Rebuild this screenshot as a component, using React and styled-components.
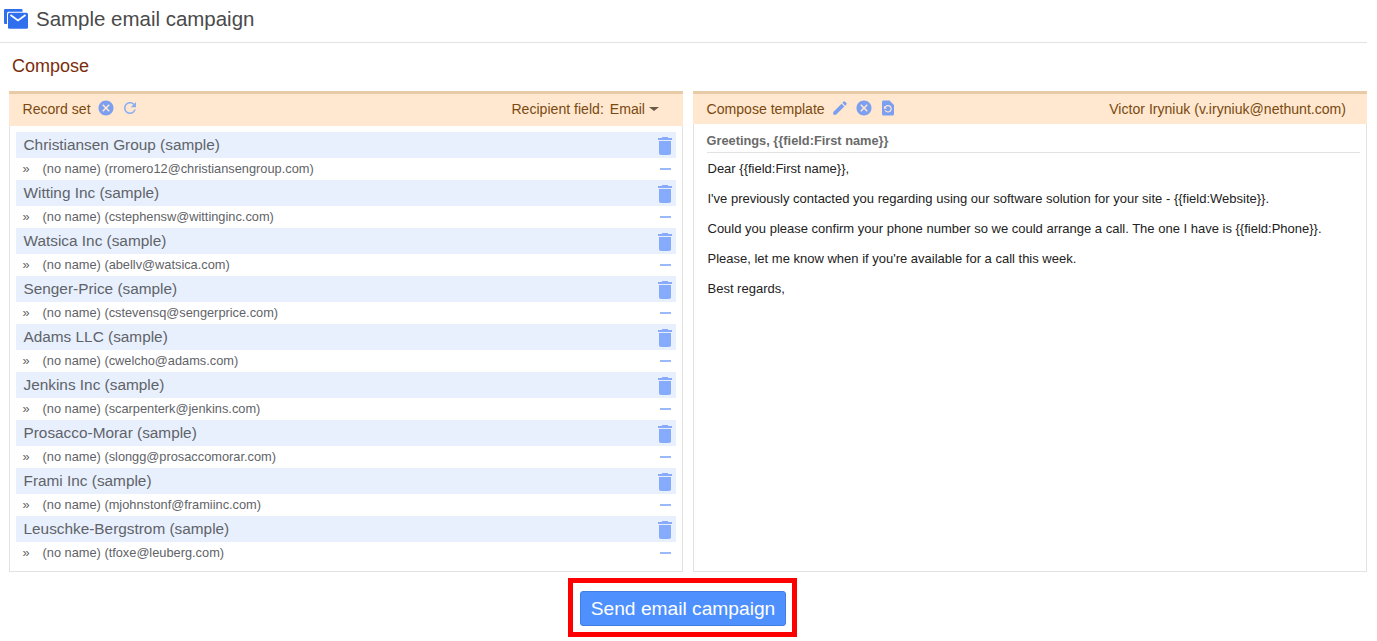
import React from "react";
import styled, { createGlobalStyle } from "styled-components";

const Global = createGlobalStyle`
  html, body { margin: 0; padding: 0; background: #fff; height: 641px; overflow: hidden; }
  body { font-family: "Liberation Sans", Arial, sans-serif; }
  * { box-sizing: border-box; }
`;

const Page = styled.div`
  width: 1367px;
  height: 641px;
  display: flex;
  flex-direction: column;
`;
const TitleBar = styled.header`
  height: 43px;
  border-bottom: 1px solid #e3e3e3;
  display: flex;
  align-items: center;
  gap: 8px;
  padding: 0 0 4px 4px;
`;
const Title = styled.h1`
  margin: 0;
  font-size: 20.48px;
  font-weight: 400;
  color: #4a4a4a;
`;
const SectionTitle = styled.h2`
  margin: 0;
  height: 48px;
  padding: 13px 0 0 12px;
  font-size: 18px;
  line-height: 21px;
  font-weight: 400;
  color: #7b2d0b;
`;
const Panels = styled.div`
  display: flex;
  gap: 10px;
  padding-left: 9px;
  height: 481px;
`;
const Panel = styled.section`
  flex: 0 0 674px;
  display: flex;
  flex-direction: column;
  border: 1px solid #e2e2e2;
  border-top: 0;
`;
const PanelHead = styled.div`
  height: ${(p) => p.$h}px;
  margin: 0 -1px;
  padding: 0 ${(p) => p.$right}px ${(p) => p.$bottom}px 13.5px;
  background: #ffe8cf;
  border-top: 3px solid #e6cba6;
  display: flex;
  align-items: center;
  justify-content: space-between;
  color: #7a4a12;
  font-size: 14.08px;
`;
const HeadGroup = styled.div`
  display: flex;
  align-items: center;
  gap: ${(p) => p.$gap || 0}px;
`;
const Glyph = styled.svg`
  width: ${(p) => p.$size}px;
  height: ${(p) => p.$size}px;
  fill: ${(p) => p.$color};
  flex: none;
  display: block;
`;
const HeadIcon = styled(Glyph)`
  margin-top: -2px;
`;
const RowIcon = styled(Glyph)`
  margin: 2px -1px 0 0;
`;
const Recipient = styled.span`
  margin-right: 6px;
`;
const Caret = styled.span`
  width: 0;
  height: 0;
  margin-left: 4px;
  border-left: 5px solid transparent;
  border-right: 5px solid transparent;
  border-top: 4px solid #6a5a48;
`;
const RecordList = styled.div`
  padding: 6px 6px 0 6px;
`;
const GroupRow = styled.div`
  height: 26px;
  background: #e8f0fe;
  display: flex;
  align-items: center;
  justify-content: space-between;
  padding-left: 7.5px;
  font-size: 15.36px;
  color: #5f6368;
`;
const EmailRow = styled.div`
  height: 22px;
  display: flex;
  align-items: center;
  justify-content: space-between;
  padding: 0 5px 0 6.5px;
  font-size: 12.8px;
  color: #5f6368;
`;
const EmailText = styled.span`
  padding-bottom: 2px;
`;
const Chevron = styled.span`
  display: inline-block;
  width: 20px;
`;
const Dash = styled.span`
  width: 11px;
  height: 2px;
  background: #9ab8fa;
`;
const Subject = styled.div`
  margin: 0 6px 0 12.5px;
  height: 29px;
  padding-top: 9px;
  border-bottom: 1px solid #e2e2e2;
  font-size: 12.8px;
  line-height: 15px;
  font-weight: 700;
  color: #6a6a6a;
`;
const MailBody = styled.div`
  padding: 8px 13.5px;
  font-size: 13px;
  line-height: 15px;
  color: #222;
`;
const Para = styled.p`
  margin: 0 0 15px;
`;
const ActionBar = styled.div`
  display: flex;
  justify-content: center;
  padding-top: 6px;
  width: 1365px;
`;
const Highlight = styled.div`
  border: 5px solid #ff0000;
  padding: 8px 6px 6px 7px;
`;
const SendButton = styled.button`
  width: 206px;
  height: 35px;
  padding: 0;
  background: #4d90fe;
  border: 1px solid #3f7fe4;
  border-radius: 3px;
  color: #fff;
  font-family: inherit;
  font-size: 19.2px;
`;

const P = {
  del: "M6 19c0 1.1.9 2 2 2h8c1.1 0 2-.9 2-2V7H6v12zM19 4h-3.5l-1-1h-5l-1 1H5v2h14V4z",
  cancel: "M12 2C6.47 2 2 6.47 2 12s4.47 10 10 10 10-4.47 10-10S17.53 2 12 2zm5 13.59L15.59 17 12 13.41 8.41 17 7 15.59 10.59 12 7 8.41 8.41 7 12 10.59 15.59 7 17 8.41 13.41 12 17 15.59z",
  refresh: "M17.65 6.35C16.2 4.9 14.21 4 12 4c-4.42 0-7.99 3.58-7.99 8s3.57 8 7.99 8c3.73 0 6.84-2.55 7.73-6h-2.08c-.82 2.33-3.04 4-5.65 4-3.31 0-6-2.69-6-6s2.69-6 6-6c1.66 0 3.14.69 4.22 1.78L13 11h7V4l-2.35 2.35z",
  edit: "M3 17.25V21h3.75L17.81 9.94l-3.75-3.75L3 17.25zM20.71 7.04a1 1 0 000-1.41l-2.34-2.34a1 1 0 00-1.41 0l-1.83 1.83 3.75 3.75 1.83-1.83z",
  restore: "M14 2H6c-1.1 0-2 .9-2 2v16c0 1.1.9 2 2 2h12c1.1 0 2-.9 2-2V8l-6-6zm-2 16c-2.05 0-3.81-1.24-4.58-3h1.71c.63.9 1.68 1.5 2.87 1.5 1.93 0 3.5-1.57 3.5-3.5S13.93 9.5 12 9.5c-1.35 0-2.52.78-3.1 1.9l1.6 1.6h-4V9l1.3 1.3C8.69 8.92 10.23 8 12 8c2.76 0 5 2.24 5 5s-2.24 5-5 5z",
};

const HIcon = ({ d, color = "#7d9ff0" }) => (
  <HeadIcon viewBox="0 0 24 24" $size={18} $color={color}>
    <path d={d} />
  </HeadIcon>
);

const Logo = () => (
  <svg width="24" height="20" viewBox="0 0 24 20" style={{ flex: "none" }}>
    <rect x="0" y="0" width="18.5" height="15" rx="1" fill="#2f6fee" />
    <rect x="3" y="2.7" width="21" height="17.3" rx="1.5" fill="#fff" />
    <rect x="4" y="3.7" width="20" height="16" rx="1.5" fill="#2f6fee" />
    <path d="M6.5 6L14 11.5L21.5 6" fill="none" stroke="#fff" strokeWidth="1.7" />
  </svg>
);

const records = [
  ["Christiansen Group (sample)", "rromero12@christiansengroup.com"],
  ["Witting Inc (sample)", "cstephensw@wittinginc.com"],
  ["Watsica Inc (sample)", "abellv@watsica.com"],
  ["Senger-Price (sample)", "cstevensq@sengerprice.com"],
  ["Adams LLC (sample)", "cwelcho@adams.com"],
  ["Jenkins Inc (sample)", "scarpenterk@jenkins.com"],
  ["Prosacco-Morar (sample)", "slongg@prosaccomorar.com"],
  ["Frami Inc (sample)", "mjohnstonf@framiinc.com"],
  ["Leuschke-Bergstrom (sample)", "tfoxe@leuberg.com"],
];

const lines = [
  "Dear {{field:First name}},",
  "I've previously contacted you regarding using our software solution for your site - {{field:Website}}.",
  "Could you please confirm your phone number so we could arrange a call. The one I have is {{field:Phone}}.",
  "Please, let me know when if you're available for a call this week.",
  "Best regards,",
];

export default function App() {
  return (
    <Page>
      <Global />
      <TitleBar>
        <Logo />
        <Title>Sample email campaign</Title>
      </TitleBar>
      <SectionTitle>Compose</SectionTitle>
      <Panels>
        <Panel>
          <PanelHead $h={35} $right={24} $bottom={2}>
            <HeadGroup $gap={6}>
              <span>Record set</span>
              <HIcon d={P.cancel} />
              <HIcon d={P.refresh} color="#8aaef5" />
            </HeadGroup>
            <HeadGroup>
              <Recipient>Recipient field:</Recipient>
              <span>Email</span>
              <Caret />
            </HeadGroup>
          </PanelHead>
          <RecordList>
            {records.map(([name, email]) => (
              <React.Fragment key={email}>
                <GroupRow>
                  {name}
                  <RowIcon viewBox="0 0 24 24" $size={24} $color="#86aafc">
                    <path d={P.del} />
                  </RowIcon>
                </GroupRow>
                <EmailRow>
                  <EmailText>
                    <Chevron>»</Chevron>(no name) ({email})
                  </EmailText>
                  <Dash />
                </EmailRow>
              </React.Fragment>
            ))}
          </RecordList>
        </Panel>
        <Panel>
          <PanelHead $h={33} $right={21} $bottom={0}>
            <HeadGroup $gap={6}>
              <span>Compose template</span>
              <HIcon d={P.edit} />
              <HIcon d={P.cancel} />
              <HIcon d={P.restore} />
            </HeadGroup>
            <span>Victor Iryniuk (v.iryniuk@nethunt.com)</span>
          </PanelHead>
          <Subject>Greetings, {"{{field:First name}}"}</Subject>
          <MailBody>
            {lines.map((l) => (
              <Para key={l}>{l}</Para>
            ))}
          </MailBody>
        </Panel>
      </Panels>
      <ActionBar>
        <Highlight>
          <SendButton>Send email campaign</SendButton>
        </Highlight>
      </ActionBar>
    </Page>
  );
}
